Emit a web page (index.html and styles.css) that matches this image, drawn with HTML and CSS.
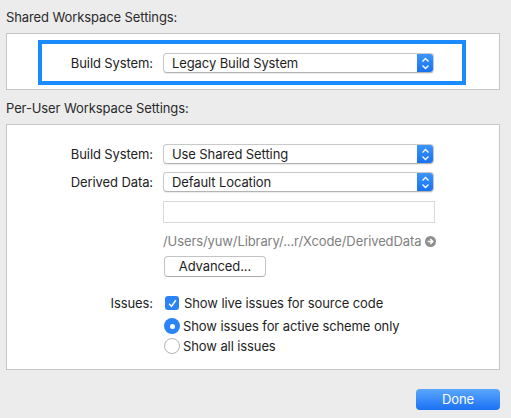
FILE: index.html
```html
<!DOCTYPE html>
<html>
<head>
<meta charset="utf-8">
<link rel="stylesheet" href="styles.css">
</head>
<body>
<div class="sheet">
  <div class="section-title first">Shared Workspace Settings:</div>
  <div class="box box-shared">
    <div class="focus">
      <div class="row">
        <div class="label">Build System:</div>
        <div class="popup"><span class="popup-text">Legacy Build System</span><span class="stepper"><svg width="9" height="13" viewBox="0 0 9 13"><path d="M1.5 4.5 L4.5 1.5 L7.5 4.5 M1.5 8.5 L4.5 11.5 L7.5 8.5" fill="none" stroke="#fff" stroke-width="1.3"/></svg></span></div>
      </div>
    </div>
  </div>
  <div class="section-title second">Per-User Workspace Settings:</div>
  <div class="box box-user">
    <div class="row">
      <div class="label">Build System:</div>
      <div class="popup"><span class="popup-text">Use Shared Setting</span><span class="stepper"><svg width="9" height="13" viewBox="0 0 9 13"><path d="M1.5 4.5 L4.5 1.5 L7.5 4.5 M1.5 8.5 L4.5 11.5 L7.5 8.5" fill="none" stroke="#fff" stroke-width="1.3"/></svg></span></div>
    </div>
    <div class="row row-derived">
      <div class="label">Derived Data:</div>
      <div class="popup"><span class="popup-text">Default Location</span><span class="stepper"><svg width="9" height="13" viewBox="0 0 9 13"><path d="M1.5 4.5 L4.5 1.5 L7.5 4.5 M1.5 8.5 L4.5 11.5 L7.5 8.5" fill="none" stroke="#fff" stroke-width="1.3"/></svg></span></div>
    </div>
    <div class="row row-field">
      <div class="label"></div>
      <div class="textfield"></div>
    </div>
    <div class="row row-path">
      <div class="label"></div>
      <div class="path">/Users/yuw/Library/...r/Xcode/DerivedData<svg class="arrow" width="11" height="11" viewBox="0 0 11 11"><circle cx="5.5" cy="5.5" r="5.5" fill="#8e8e8e"/><path d="M2.6 5.5 H7.6 M5.3 3 L7.8 5.5 L5.3 8" fill="none" stroke="#fff" stroke-width="1.5"/></svg></div>
    </div>
    <div class="row row-adv">
      <div class="label"></div>
      <div class="button">Advanced...</div>
    </div>
    <div class="row row-issues">
      <div class="label">Issues:</div>
      <div class="check-line"><span class="checkbox"><svg width="13" height="13" viewBox="0 0 13 13"><path d="M3.2 6.8 L5.5 9.4 L9.8 3.2" fill="none" stroke="#fff" stroke-width="1.5"/></svg></span>Show live issues for source code</div>
    </div>
    <div class="row row-radio1">
      <div class="label"></div>
      <div class="radio-line"><span class="radio on"></span>Show issues for active scheme only</div>
    </div>
    <div class="row row-radio2">
      <div class="label"></div>
      <div class="radio-line"><span class="radio"></span>Show all issues</div>
    </div>
  </div>
  <div class="footer">
    <div class="done">Done</div>
  </div>
</div>
</body>
</html>
```

FILE: styles.css
```css
html, body {
  margin: 0;
  padding: 0;
  background: #ececec;
}
body {
  font-family: Inter, "Liberation Sans", Arial, sans-serif;
  font-size: 13px;
  letter-spacing: -0.1px;
  color: #222;
  width: 511px;
  height: 418px;
  overflow: hidden;
}
.sheet {
  padding: 0 11px 0 6px;
}
.section-title {
  color: #2a2a2a;
  line-height: 16px;
}
.section-title.first {
  padding-top: 9px;
  height: 24px;
}
.section-title.second {
  padding-top: 10px;
  height: 24px;
}
.box {
  background: #fff;
  border: 1px solid #c6c6c6;
}
.box-shared {
  padding: 6px 33px 0 31px;
  box-sizing: border-box;
  height: 57px;
}
.focus {
  border: 4px solid #1a8cff;
  height: 45px;
  box-sizing: border-box;
  padding: 9px 0 0 0;
}
.focus .row .label {
  width: 111px;
}
.row {
  display: flex;
  align-items: center;
  height: 20px;
}
.label {
  width: 146px;
  text-align: right;
  padding-right: 10px;
  flex: none;
  color: #222;
}
.popup {
  width: 271px;
  height: 20px;
  box-sizing: border-box;
  border: 1px solid #c9c9c9;
  border-bottom-color: #b3b3b3;
  border-radius: 4px;
  display: flex;
  align-items: center;
  background: #fff;
  overflow: hidden;
  box-shadow: 0 0.5px 1px rgba(0,0,0,0.08);
}
.popup-text {
  flex: 1;
  padding-left: 8px;
  color: #1e1e1e;
}
.stepper {
  width: 17px;
  height: 20px;
  margin-right: -1px;
  background: linear-gradient(#3c97fc, #1670f0);
  display: flex;
  align-items: center;
  justify-content: center;
  border-radius: 0 4px 4px 0;
}
.box-user {
  height: 246px;
  box-sizing: border-box;
  padding-top: 19px;
}
.row-derived {
  margin-top: 8px;
}
.row-field {
  margin-top: 9px;
  height: 22px;
}
.textfield {
  width: 272px;
  height: 22px;
  box-sizing: border-box;
  border: 1px solid #d9d9d9;
  background: #fff;
}
.row-path {
  margin-top: 8px;
  height: 20px;
}
.path {
  color: #808080;
  display: flex;
  align-items: center;
  white-space: nowrap;
}
.arrow {
  margin-left: 4px;
}
.row-adv {
  margin-top: 5px;
  height: 21px;
}
.button {
  margin-left: 1px;
  width: 102px;
  height: 21px;
  box-sizing: border-box;
  border: 1px solid #c3c3c3;
  border-bottom-color: #adadad;
  border-radius: 4px;
  background: #fff;
  text-align: center;
  line-height: 19px;
  color: #1e1e1e;
}
.row-issues {
  margin-top: 16px;
}
.checkbox {
  width: 14px;
  height: 14px;
  border-radius: 3px;
  background: #2b84f6;
  display: inline-flex;
  align-items: center;
  justify-content: center;
  margin: 0 5px 0 2px;
}
.check-line, .radio-line {
  display: flex;
  align-items: center;
  color: #1e1e1e;
}
.row-radio1 {
  margin-top: 3px;
}
.row-radio2 {
  margin-top: 0;
}
.radio {
  width: 16px;
  height: 16px;
  border-radius: 50%;
  box-sizing: border-box;
  border: 1px solid #b4b4b4;
  background: #fff;
  margin: 0 3px 0 1px;
  position: relative;
}
.radio.on {
  border: none;
  background: #2b84f6;
}
.radio.on::after {
  content: "";
  position: absolute;
  left: 5.5px;
  top: 5.5px;
  width: 5px;
  height: 5px;
  border-radius: 50%;
  background: #fff;
}
.footer {
  display: flex;
  justify-content: flex-end;
  padding-top: 19px;
}
.done {
  width: 84px;
  height: 21px;
  border-radius: 4px;
  background: linear-gradient(#5aa6fd, #1a72f5);
  color: #fff;
  text-align: center;
  line-height: 21px;
  font-size: 13px;
}
```
